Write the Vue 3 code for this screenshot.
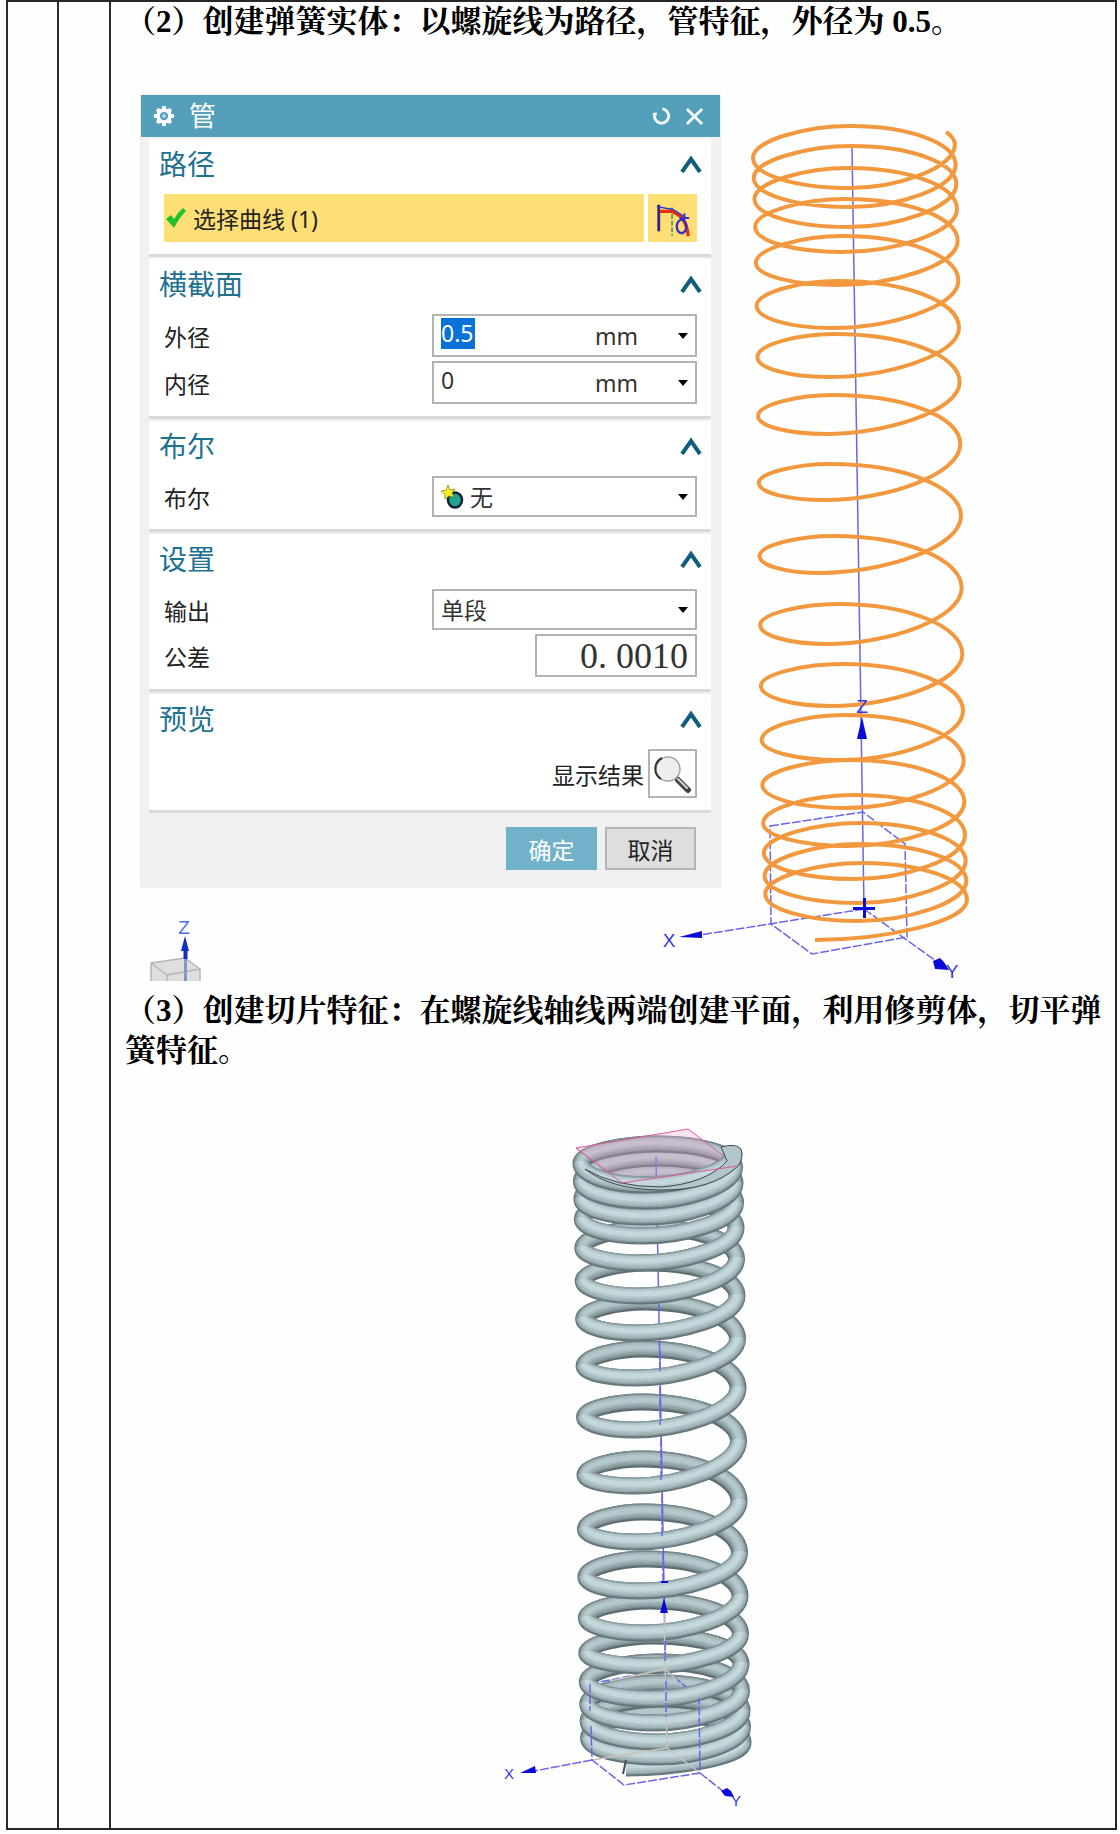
<template>
  <main class="page">
    <div class="col"></div>
    <div class="col"></div>
    <article class="col content">
      <p class="step">（2）创建弹簧实体：以螺旋线为路径，管特征，外径为 0.5。</p>

      <div class="figure">
        <svg class="scene" viewBox="111 94 1004 886" role="img" aria-label="螺旋线">
          <g class="axis">
            <path d="M852 146L864 908" />
            <path d="M770 825L863 811L905 843L907 936L812 953L771 923Z" stroke-dasharray="9 2" />
            <path d="M864 908L700 934M864 908L940 963" stroke-dasharray="9 2" />
          </g>
          <path class="wire" :d="wirePath" />
          <g class="axis-solid">
            <path d="M862 716L867 738H857Z" />
            <path d="M679 936L702 930V937Z" />
            <path d="M949 969L935 968L933 960L940 957L944 961Z" />
            <path d="M853 906h22v3h-22zM863 897h3v20h-3z" />
          </g>
          <text x="669" y="946" class="axis-text">X</text>
          <text x="952" y="977" class="axis-text">Y</text>
          <text x="862" y="712" class="axis-text">Z</text>

          <g stroke="#b5b5b5" stroke-width="1.5" stroke-linejoin="round">
            <path d="M151 980V962L185 957L200 968V980" fill="#dedede" />
            <path d="M151 962L167 974L200 968M167 974V980" fill="none" />
          </g>
          <path d="M185.500 946V958" stroke="#1030b8" stroke-width="4" />
          <path d="M185.500 958V980" stroke="#7f9ac4" stroke-width="3" />
          <path d="M185 935L189 950H181Z" fill="#0f2fc4" />
          <text x="184" y="933" class="axis-text triad-text">Z</text>
        </svg>

        <form class="dialog" @submit.prevent>
          <header class="dialog-head">
            <svg class="gear" viewBox="0 0 24 24" aria-hidden="true">
              <circle cx="12" cy="12" r="6.500" />
              <path d="M12 1v5M12 18v5M1 12h5M18 12h5M4.500 4.500l3.300 3.300M16.200 16.200l3.300 3.300M19.500 4.500l-3.300 3.300M7.800 16.200l-3.300 3.300" />
              <circle cx="12" cy="12" r="1.500" class="gear-dot" />
            </svg>
            <h1>管</h1>
            <button type="button" class="head-btn" aria-label="重置">
              <svg viewBox="0 0 20 20"><path d="M1 8L5 7M3 7A7.500 7.500 0 1 0 11 2" /></svg>
            </button>
            <button type="button" class="head-btn" aria-label="关闭">
              <svg viewBox="0 0 20 20"><path d="M2 2L18 18M18 2L2 18" /></svg>
            </button>
          </header>

          <section class="group">
            <h2>路径 <svg class="chevron" viewBox="0 0 22 18"><path d="M2 17L11 4L20 17" /></svg></h2>
            <div class="pick">
              <button type="button" class="pick-main">
                <svg viewBox="0 0 20 20" class="check"><path d="M0 11L5 7L8 11Q12 4 17 0L20 3Q13 10 8 20Z" /></svg>
                选择曲线 (1)
              </button>
              <button type="button" class="pick-icon" aria-label="曲线">
                <svg viewBox="0 0 40 40" fill="none">
                  <path d="M5 6V34" stroke="#33228a" stroke-width="3" />
                  <path d="M19 9V39" stroke="#2b8a5a" stroke-width="1.500" stroke-dasharray="5 2" />
                  <path d="M6 13L18 13Q34 17 36 39" stroke="#e03010" stroke-width="3.500" />
                  <path d="M3 8L20 11L34 20" stroke="#3a2fc0" stroke-width="1.500" />
                  <ellipse cx="29" cy="29" rx="5" ry="7" stroke="#3a2fc0" stroke-width="2.500" />
                  <path d="M27 20h10M32 15v8" stroke="#3a2fc0" stroke-width="2" />
                </svg>
              </button>
            </div>
          </section>

          <section class="group">
            <h2>横截面 <svg class="chevron" viewBox="0 0 22 18"><path d="M2 17L11 4L20 17" /></svg></h2>
            <div v-for="row in diameters" :key="row.id" class="row">
              <label :for="row.id">{{ row.label }}</label>
              <div class="field">
                <input :id="row.id" v-model="row.value" class="num" :class="{ selected: row.selected }" />
                <div class="pull unit">
                  <select :aria-label="row.label + '单位'"><option>mm</option></select>
                  <svg class="arrow" viewBox="0 0 10 6"><path d="M0 0H10L5 6Z" /></svg>
                </div>
              </div>
            </div>
          </section>

          <section class="group">
            <h2>布尔 <svg class="chevron" viewBox="0 0 22 18"><path d="M2 17L11 4L20 17" /></svg></h2>
            <div class="row">
              <label for="bool">布尔</label>
              <div class="field short">
                <div class="pull with-icon">
                  <select id="bool"><option>无</option></select>
                  <svg class="bool-icon" viewBox="0 0 24 24">
                    <ellipse cx="14" cy="15" rx="7" ry="7.500" fill="#1fa391" stroke="#123" stroke-width="2.500" />
                    <path d="M7 0L9 5L14 4L11 8L13 12L8 11L4 14L4 9L0 6L5 5Z" fill="#f4f01c" stroke="#8a8a20" stroke-width=".8" />
                  </svg>
                  <svg class="arrow" viewBox="0 0 10 6"><path d="M0 0H10L5 6Z" /></svg>
                </div>
              </div>
            </div>
          </section>

          <section class="group">
            <h2>设置 <svg class="chevron" viewBox="0 0 22 18"><path d="M2 17L11 4L20 17" /></svg></h2>
            <div class="row">
              <label for="output">输出</label>
              <div class="field short">
                <div class="pull">
                  <select id="output"><option>单段</option></select>
                  <svg class="arrow" viewBox="0 0 10 6"><path d="M0 0H10L5 6Z" /></svg>
                </div>
              </div>
            </div>
            <div class="row">
              <label for="tol">公差</label>
              <input id="tol" v-model="tolerance" class="field tolerance" />
            </div>
          </section>

          <section class="group">
            <h2>预览 <svg class="chevron" viewBox="0 0 22 18"><path d="M2 17L11 4L20 17" /></svg></h2>
            <div class="row preview">
              <label for="show">显示结果</label>
              <button id="show" type="button" class="lens">
                <svg viewBox="0 0 40 40">
                  <path d="M25 26L35 36" stroke="#444" stroke-width="6" stroke-linecap="round" />
                  <path d="M25 25L34 34" stroke="#d5d5cc" stroke-width="2" stroke-linecap="round" />
                  <circle cx="15" cy="15" r="12" fill="#eceef0" stroke="#a5a5a5" stroke-width="1.500" />
                  <path d="M8 25A12 12 0 0 1 9 4" fill="none" stroke="#333" stroke-width="2" />
                </svg>
              </button>
            </div>
          </section>

          <footer class="dialog-foot">
            <button type="submit" class="btn primary">确定</button>
            <button type="button" class="btn">取消</button>
          </footer>
        </form>
      </div>

      <p class="step">（3）创建切片特征：在螺旋线轴线两端创建平面，利用修剪体，切平弹簧特征。</p>

      <svg class="scene" viewBox="111 1070 1004 757" role="img" aria-label="弹簧">
        <g v-for="(d, i) in backArcs" :key="'b' + i" class="tube">
          <path v-for="t in tube" :key="t.width" :d="d" :stroke="t.back" :stroke-width="t.width" :transform="`translate(0 ${t.dy})`" />
        </g>
        <path class="axis" d="M656 1156L667 1747" />
        <path d="M576 1147L688 1128L737 1165L622 1182Z" fill="#f3a9d3" fill-opacity=".3" stroke="#d85f98" />
        <g class="axis" stroke-dasharray="9 2">
          <path d="M590 1683L665 1668L699 1697" />
        </g>
        <g v-for="(d, i) in frontArcs" :key="'f' + i" class="tube">
          <path v-for="t in tube" :key="t.width" :d="d" :stroke="t.front" :stroke-width="t.width" :transform="`translate(0 ${t.dy})`" />
        </g>
        <path d="M585 1168Q615 1186 660 1186Q706 1183 727 1160L721 1146Q736 1142 741 1148Q744 1156 738 1165Q712 1190 658 1189Q610 1188 585 1168Z" fill="#b3c6ca" stroke="#3d494c" />
        <path d="M576 1147L622 1182L737 1165" fill="none" stroke="#d85f98" />
        <path d="M626 1759L623 1773" stroke="#465154" stroke-width="2" />

        <path class="trace" d="M664 1612L667 1747L592 1759M667 1747L700 1772M665 1668L610 1680M665 1668L677 1679" />
        <g class="axis" stroke-dasharray="9 2">
          <path d="M590 1683V1710M591 1725L592 1759L624 1784L700 1772L699 1697" />
          <path d="M592 1759L534 1770M700 1772L724 1791" />
          <path d="M665 1640V1662M666 1680V1716M660 1350V1372M660 1386V1424M661 1437V1480M662 1493V1536M663 1550V1582" />
        </g>
        <g class="axis-solid">
          <path d="M664 1597L668 1612H660Z" />
          <path d="M520 1772L535 1765L536 1772Z" />
          <path d="M734 1796L725 1795L721 1790L727 1787L731 1790Z" />
          <path d="M661 1580h7v2h-7z" />
        </g>
        <text x="509" y="1778" class="axis-text small">X</text>
        <text x="736" y="1805" class="axis-text small">Y</text>
      </svg>
    </article>
  </main>
</template>

<script setup>
import { ref } from 'vue'

const diameters = ref([
  { id: 'outer', label: '外径', value: '0.5', selected: true },
  { id: 'inner', label: '内径', value: '0', selected: false },
])
const tolerance = ref('0. 0010')

// extreme points of each turn, from top to bottom
const wire = {
  right: [143, 164, 183, 208, 240, 280, 327, 381, 443, 515, 587, 653, 710, 760, 801, 834, 860, 880, 899],
  front: [187, 206, 226, 251, 284, 327, 376, 433, 499, 572, 643, 705, 759, 807, 845, 878, 902, 920, 939],
  left: [157, 177, 198, 226, 262, 305, 356, 415, 482, 555, 624, 685, 739, 784, 822, 852, 875, 893],
  back: [125, 145, 167, 198, 235, 280, 333, 394, 463, 535, 603, 663, 714, 759, 794, 822, 843, 862],
  frontX: [850, 850, 848, 842, 838, 832, 828, 826, 825, 820, 827, 832, 840, 845, 850, 855, 858, 858, 815],
  backX: [850, 852, 848, 845, 842, 838, 834, 832, 830, 833, 838, 842, 845, 850, 855, 860, 860, 862],
  leftX: [753, 766],
  rightX: [955, 967],
}

const solid = {
  right: [1152, 1166, 1182, 1202, 1227, 1258, 1295, 1338, 1387, 1440, 1500, 1552, 1595, 1633, 1663, 1690, 1710, 1726, 1742],
  front: [1184, 1200, 1216, 1235, 1262, 1295, 1332, 1377, 1429, 1485, 1541, 1590, 1632, 1665, 1698, 1722, 1741, 1756, 1767],
  left: [1162, 1180, 1198, 1218, 1247, 1280, 1318, 1365, 1416, 1474, 1528, 1576, 1617, 1652, 1681, 1703, 1720, 1737],
  back: [1143, 1157, 1172, 1197, 1227, 1262, 1301, 1348, 1401, 1458, 1511, 1558, 1600, 1635, 1661, 1682, 1698, 1712],
  frontX: [646, 646, 645, 643, 641, 639, 637, 635, 634, 634, 636, 640, 644, 648, 652, 655, 657, 658, 626],
  backX: [658, 658, 656, 654, 652, 648, 645, 643, 642, 642, 644, 646, 650, 654, 657, 660, 661, 662],
  leftX: [581, 589],
  rightX: [734, 743],
}

const tube = [
  { width: 17, dy: 0, front: '#66767a', back: '#5c6b6f' },
  { width: 15, dy: -1, front: '#8b9fa3', back: '#788a8e' },
  { width: 12, dy: -1, front: '#a5b8bc', back: '#90a3a7' },
  { width: 9, dy: -2, front: '#b5c8cc', back: '#a5b8bc' },
  { width: 5, dy: -2, front: '#c4d8dc', back: '#b4c7cb' },
]

const K = 0.56
const side = (pair, i, n) => pair[0] + ((pair[1] - pair[0]) * i) / n

// quarter turn that leaves vertically and arrives horizontally
const drop = (x1, y1, x2, y2) => `C${x1} ${y1 + (y2 - y1) * K} ${x2 + (x1 - x2) * (1 - K)} ${y2} ${x2} ${y2}`
// quarter turn that leaves horizontally and arrives vertically
const rise = (x1, y1, x2, y2) => `C${x1 + (x2 - x1) * K} ${y1} ${x2} ${y2 - (y2 - y1) * K} ${x2} ${y2}`

function arcs(c) {
  const n = c.right.length - 1
  const front = []
  const back = []
  for (let i = 0; i <= n; i++) {
    const rx = side(c.rightX, i, n)
    const lx = side(c.leftX, i, n)
    let f = drop(rx, c.right[i], c.frontX[i], c.front[i])
    if (i < n) {
      f += rise(c.frontX[i], c.front[i], lx, c.left[i])
      const nx = side(c.rightX, i + 1, n)
      back.push({
        start: `M${lx} ${c.left[i]}`,
        d: drop(lx, c.left[i], c.backX[i], c.back[i]) + rise(c.backX[i], c.back[i], nx, c.right[i + 1]),
      })
    }
    front.push({ start: `M${rx} ${c.right[i]}`, d: f })
  }
  return { front, back }
}

const wireArcs = arcs(wire)
const wirePath =
  'M946 131Q954 136 955 143' + wireArcs.front.map((f, i) => f.d + (wireArcs.back[i]?.d ?? '')).join('')

const solidArcs = arcs(solid)
const backArcs = solidArcs.back.map((a) => a.start + a.d).reverse()
const frontArcs = solidArcs.front.map((a) => a.start + a.d).reverse()
</script>

<style>
body {
  margin: 0;
  background: #fefefe;
}
</style>

<style scoped>
.page {
  display: grid;
  grid-template-columns: 51px 52px 1fr;
  margin: 0 3px 5px 6px;
  border: 2px solid #262626;
  border-left: 0;
  font-family: 'Noto Sans', 'Noto Sans CJK SC', sans-serif;
  color: #222;
}

.col {
  border-left: 2px solid #2c2c2c;
  min-width: 0;
}

.step {
  margin: 0;
  padding: 0 4px 0 14px;
  font: bold 31px/40px 'Liberation Serif', 'Noto Serif CJK SC', 'Noto Sans CJK SC', serif;
  color: #000;
}

.scene {
  display: block;
  width: 100%;
  overflow: visible;
}

.figure {
  display: grid;
  align-items: start;
  margin: 53px 0 10px;
}

.figure > * {
  grid-area: 1 / 1;
}

.wire {
  fill: none;
  stroke: #f2993f;
  stroke-width: 4;
  stroke-linejoin: round;
}

.axis {
  fill: none;
  stroke: #6a66e6;
  stroke-width: 1.5;
}

.axis-solid {
  fill: #0b0bd8;
}

.axis-text {
  font: 19px 'Liberation Sans', sans-serif;
  fill: #3a36dc;
  text-anchor: middle;
}

.axis-text.small {
  font-size: 15px;
}

.triad-text {
  fill: #4a6cf0;
}

.trace {
  fill: none;
  stroke: #c9c5bd;
  stroke-width: 1.5;
}

.tube {
  fill: none;
}

.dialog {
  width: 579px;
  max-width: 100%;
  box-sizing: border-box;
  margin-left: 30px;
  background: #f0f0f0;
  box-shadow: 0 0 2px #c8c8c8;
  font-size: 23px;
}

.dialog-head {
  display: flex;
  align-items: center;
  gap: 14px;
  height: 42px;
  padding: 0 16px 0 12px;
  background: #549fb9;
  color: #fff;
}

.dialog-head h1 {
  flex: 1;
  margin: 0;
  font-size: 27px;
  line-height: 42px;
  font-weight: 400;
}

.gear {
  width: 22px;
  height: 22px;
  fill: none;
  stroke: #fff;
  stroke-width: 4;
}

.gear-dot {
  stroke-width: 1;
}

button {
  padding: 0;
  border: 0;
  background: none;
  font: inherit;
  color: inherit;
}

.head-btn svg {
  display: block;
  width: 19px;
  height: 19px;
  fill: none;
  stroke: #f4fafc;
  stroke-width: 3;
}

.group {
  margin: 2px 9px 0 8px;
  padding: 0 14px 12px 15px;
  background: #fff;
  border-bottom: 3px solid #dadada;
}

.group h2 {
  display: flex;
  justify-content: space-between;
  align-items: center;
  margin: 0 -5px 5px;
  font-size: 28px;
  line-height: 50px;
  font-weight: 400;
  color: #1f7190;
}

.chevron {
  width: 22px;
  height: 18px;
  fill: none;
  stroke: #0f5f7c;
  stroke-width: 4;
}

.pick {
  display: flex;
  gap: 4px;
}

.pick-main {
  flex: 1;
  display: flex;
  align-items: center;
  gap: 7px;
  height: 48px;
  padding-left: 2px;
  background: #fedf76;
}

.check {
  width: 20px;
  height: 20px;
  fill: #1fc22b;
}

.pick-icon {
  width: 49px;
  background: #fedf76;
}

.pick-icon svg {
  display: block;
  width: 40px;
  height: 38px;
  margin: auto;
}

.row {
  display: flex;
  justify-content: space-between;
  align-items: center;
}

.row + .row {
  margin-top: 4px;
}

.field {
  display: flex;
  align-items: center;
  box-sizing: border-box;
  width: 265px;
  height: 43px;
  padding: 0 7px;
  border: 2px solid #b3b3b3;
  background: #fff;
}

.field.short {
  height: 41px;
}

.num {
  box-sizing: border-box;
  width: 34px;
  height: 31px;
  margin-bottom: 5px;
  padding: 0;
  border: 0;
  background: none;
  font: 23px 'Noto Sans', sans-serif;
  color: #333;
}

.num.selected {
  background: #0872d8;
  color: #fff;
}

.pull {
  flex: 1;
  display: grid;
  align-items: center;
}

.pull > * {
  grid-area: 1 / 1;
}

.unit {
  margin-left: 120px;
}

select {
  appearance: none;
  width: 100%;
  padding: 0;
  border: 0;
  background: none;
  font: inherit;
  color: #333;
}

.with-icon select {
  padding-left: 29px;
}

.bool-icon {
  width: 24px;
  height: 24px;
}

.arrow {
  justify-self: end;
  width: 10px;
  height: 6px;
  pointer-events: none;
}

.tolerance {
  width: 162px;
  font: 36px 'Liberation Serif', serif;
  color: #333;
  text-align: right;
}

.preview {
  justify-content: flex-end;
  gap: 4px;
}

.lens {
  width: 49px;
  height: 49px;
  border: 2px solid #b3b3b3;
  background: #fff;
}

.lens svg {
  display: block;
  width: 40px;
  height: 40px;
  margin: auto;
}

.dialog-foot {
  display: flex;
  justify-content: flex-end;
  gap: 8px;
  padding: 14px 24px 17px;
}

.btn {
  width: 91px;
  height: 43px;
  border: 2px solid #b5b5b5;
  background: #dedede;
}

.btn.primary {
  border-color: #72b2c8;
  background: #72b2c8;
  color: #fff;
}
</style>
